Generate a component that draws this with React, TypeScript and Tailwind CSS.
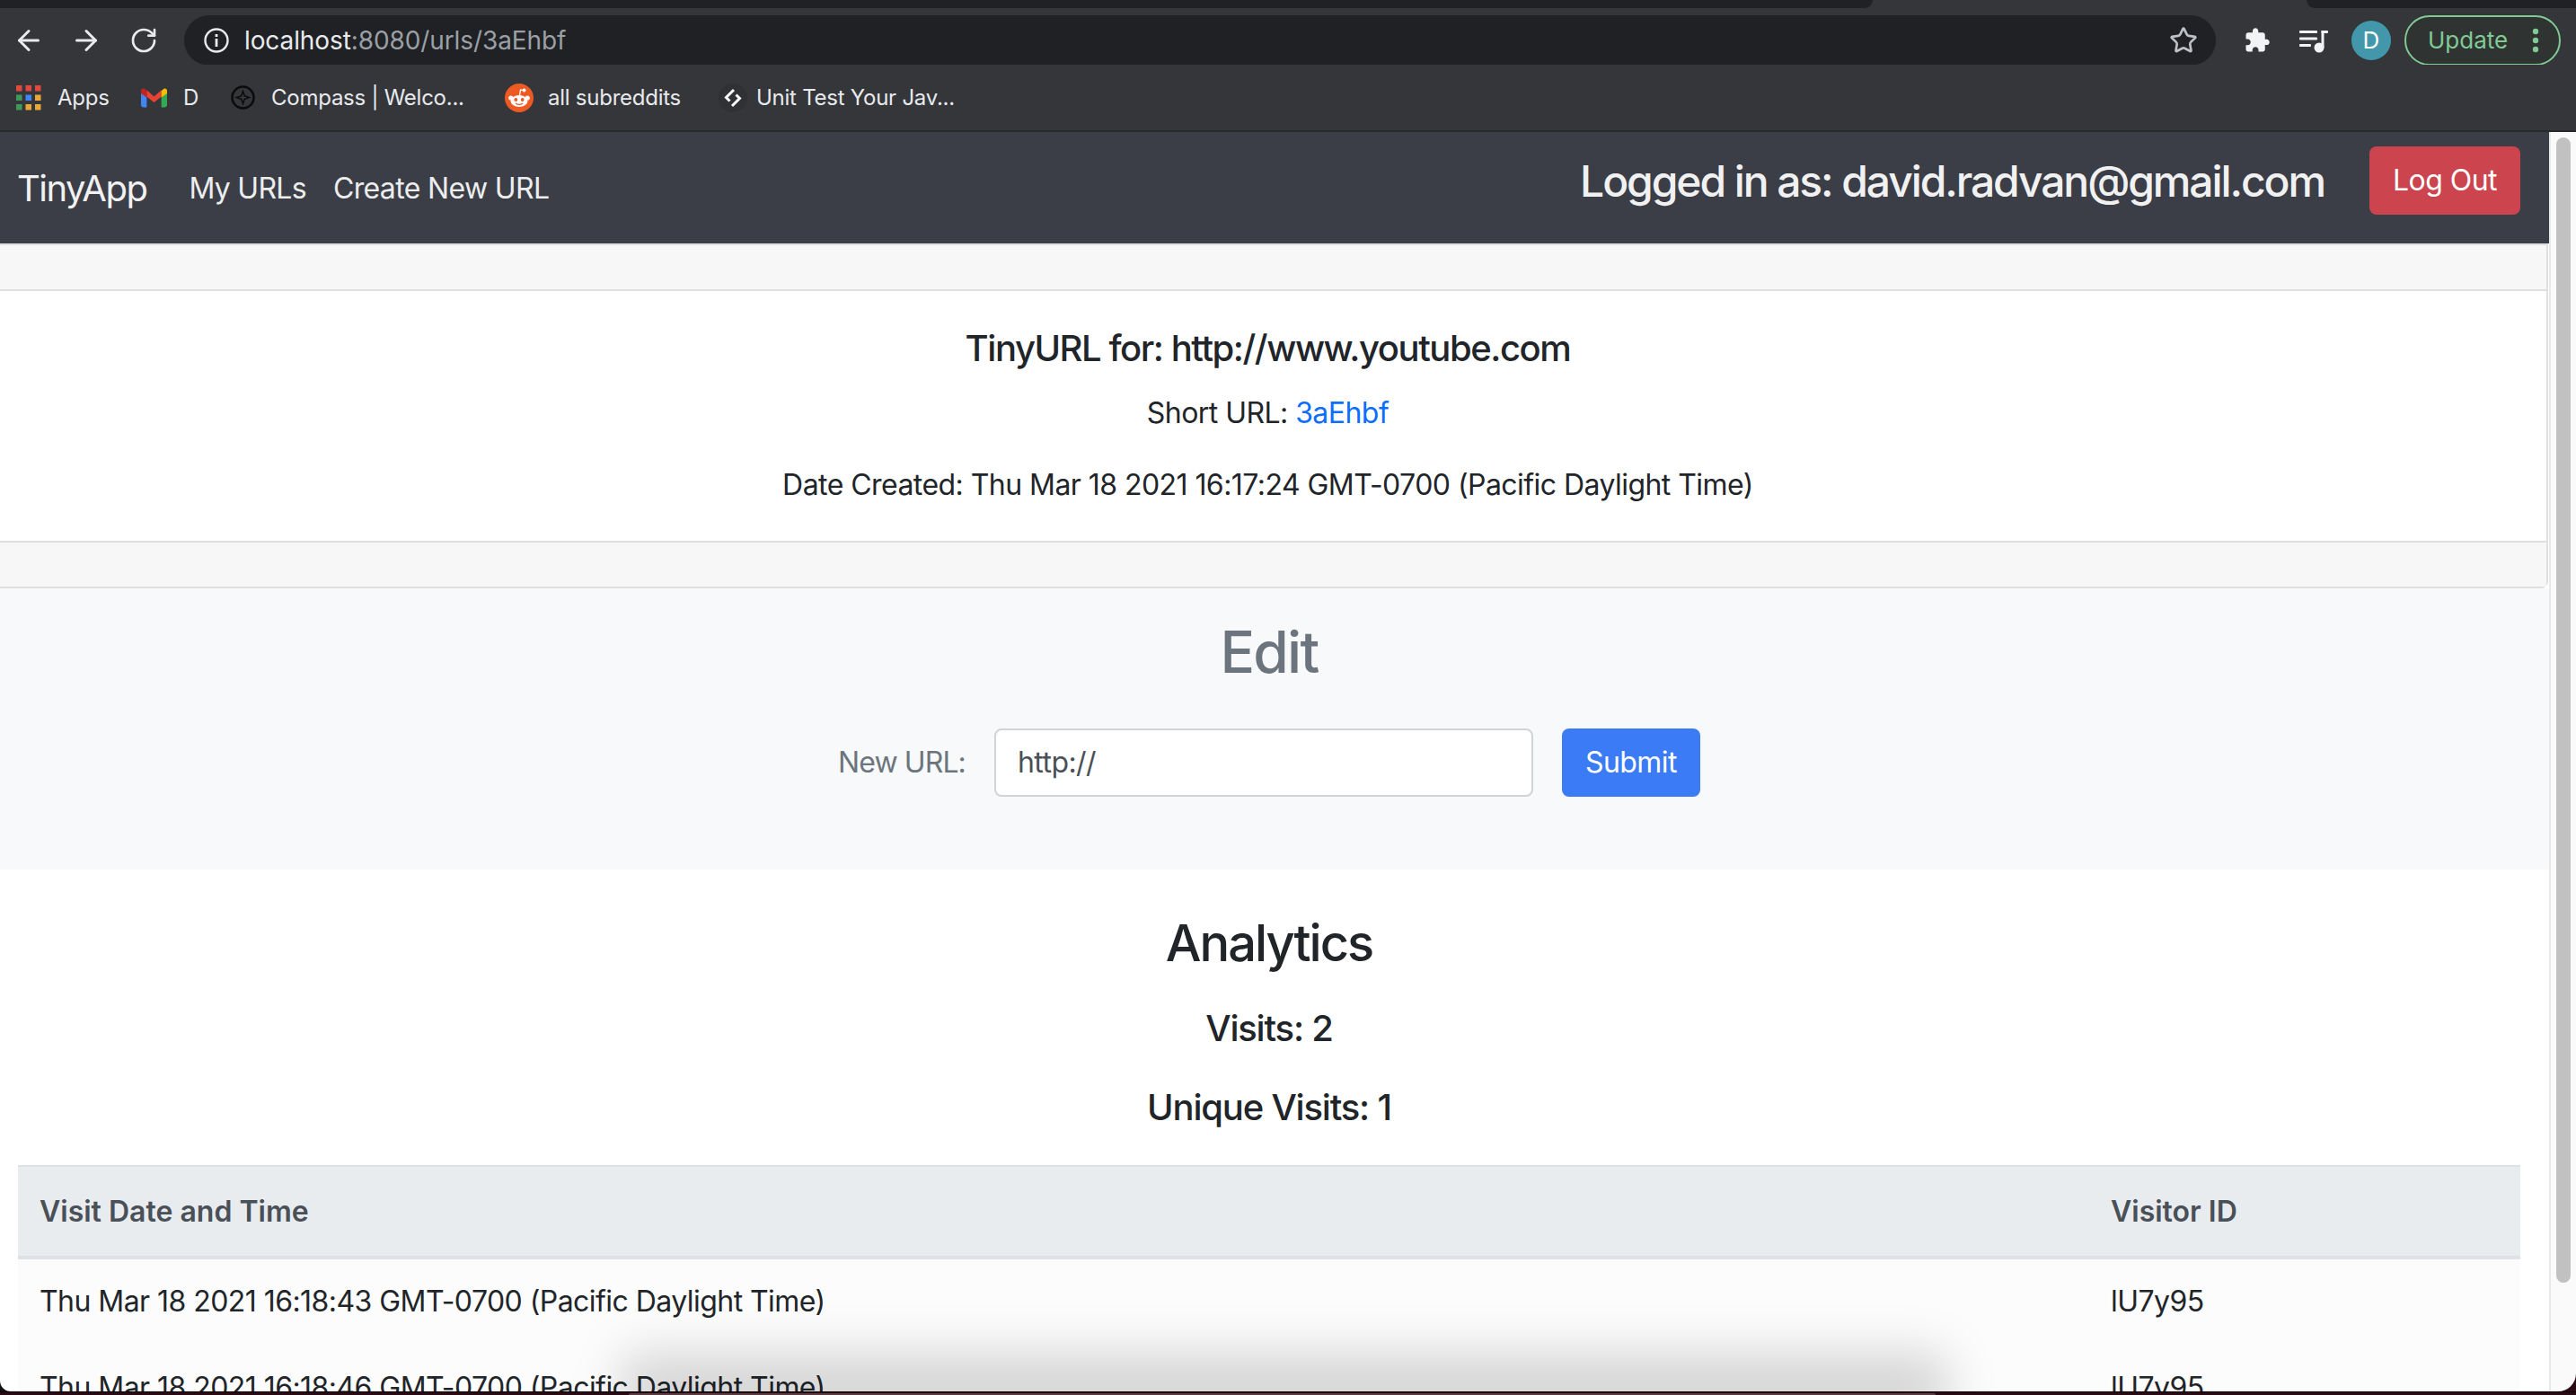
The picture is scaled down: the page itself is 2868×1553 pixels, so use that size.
import React from "react";
import { ArrowLeft, ArrowRight, RotateCw, Star } from "lucide-react";

function Bookmark({ icon, label, className }: { icon: React.ReactNode; label: string; className?: string }) {
  return (
    <div className={"flex items-center " + (className ?? "")}>
      {icon}
      <span className="text-[24px] tracking-[-0.25px] text-[#e8eaed] whitespace-nowrap">{label}</span>
    </div>
  );
}

function AppsIcon() {
  const rows = [
    ["#e2483b", "#e2483b", "#e2483b"],
    ["#3f9a5a", "#4285f4", "#eaa63b"],
    ["#3f9a5a", "#eaa63b", "#eaa63b"],
  ];
  return (
    <svg width="28" height="28" viewBox="0 0 28 28" className="mr-[18px]">
      {rows.map((r, y) =>
        r.map((c, x) => <rect key={`${x}-${y}`} x={x * 10.5} y={y * 10.5} width="6.500" height="6.500" fill={c} />)
      )}
    </svg>
  );
}

function GmailIcon() {
  return (
    <svg width="29" height="23" viewBox="0 0 32 24" className="mr-[18px]">
      <path d="M0 3v18c0 1.700 1.300 3 3 3h4V10z" fill="#4285f4" />
      <path d="M25 10v14h4c1.700 0 3-1.300 3-3V3z" fill="#34a853" />
      <path d="M7 3l9 8 9-8v8l-9 7-9-7z" fill="#ea4335" />
      <path d="M25 4l2-2c2-2 5-1 5 2v3l-7 5z" fill="#fbbc04" />
      <path d="M0 4c0-3 3-4 5-2l2 2v8L0 7z" fill="#c5221f" />
    </svg>
  );
}

function CompassIcon() {
  return (
    <svg width="27" height="27" viewBox="0 0 27 27" className="mr-[18px]">
      <circle cx="13.500" cy="13.500" r="12" fill="none" stroke="#0b0b0b" strokeWidth="2.500" />
      <path d="M13.500 6.500l1.800 5.200 5.200 1.800-5.200 1.800-1.800 5.200-1.800-5.200-5.200-1.800 5.200-1.800z" fill="none" stroke="#0b0b0b" strokeWidth="1.500" />
    </svg>
  );
}

function RedditIcon() {
  return (
    <svg width="32" height="32" viewBox="0 0 32 32" className="mr-[16px]">
      <circle cx="16" cy="16" r="16" fill="#ee5a24" />
      <ellipse cx="16" cy="19.500" rx="9.500" ry="6.500" fill="#fff" />
      <circle cx="6.800" cy="16" r="2.600" fill="#fff" />
      <circle cx="25.200" cy="16" r="2.600" fill="#fff" />
      <circle cx="21.500" cy="7.500" r="2" fill="#fff" />
      <path d="M16.500 13l1-6 3.500.6" fill="none" stroke="#fff" strokeWidth="1.300" />
      <circle cx="12.300" cy="18" r="1.900" fill="#ee5a24" />
      <circle cx="19.700" cy="18" r="1.900" fill="#ee5a24" />
      <path d="M12 22c2.500 1.800 5.500 1.800 8 0" fill="none" stroke="#ee5a24" strokeWidth="1.300" />
    </svg>
  );
}

function TestIcon() {
  return (
    <svg width="32" height="32" viewBox="0 0 32 32" className="mr-[10px] -ml-[2px]">
      <circle cx="16" cy="16" r="16" fill="#303134" />
      <path d="M17 7L8.500 15.500l4 4" fill="none" stroke="#f8f9fa" strokeWidth="3" />
      <path d="M15 25l8.500-8.500-4-4" fill="none" stroke="#f8f9fa" strokeWidth="3" />
    </svg>
  );
}

function PuzzleIcon() {
  return (
    <svg width="30" height="30" viewBox="0 0 24 24" fill="#f1f3f4">
      <path d="M20.500 11H19V7c0-1.100-.9-2-2-2h-4V3.500C13 2.120 11.880 1 10.500 1S8 2.120 8 3.500V5H4c-1.100 0-1.990.9-1.990 2v3.800H3.500c1.490 0 2.700 1.210 2.700 2.700s-1.210 2.700-2.700 2.700H2V20c0 1.100.9 2 2 2h3.800v-1.500c0-1.490 1.210-2.700 2.700-2.700s2.700 1.210 2.700 2.700V22H17c1.100 0 2-.9 2-2v-4h1.500c1.380 0 2.500-1.120 2.500-2.500S21.880 11 20.500 11z" />
    </svg>
  );
}

function MediaIcon() {
  return (
    <svg width="32" height="26" viewBox="0 0 32 26" fill="#f1f3f4">
      <rect x="0" y="1" width="20" height="3" rx="1" />
      <rect x="0" y="8.500" width="20" height="3" rx="1" />
      <rect x="0" y="16" width="13" height="3" rx="1" />
      <circle cx="22" cy="20" r="5.500" />
      <rect x="24.500" y="1" width="3" height="19" />
      <rect x="24.500" y="1" width="7.500" height="3" rx="1" />
    </svg>
  );
}

export default function App() {
  return (
    <div className="relative w-[2868px] h-[1553px] overflow-hidden flex flex-col bg-white text-[#212529] font-['Inter','Liberation_Sans',sans-serif]">
      {/* tab strip */}
      <div className="h-[9px] shrink-0 flex bg-[#35363a]">
        <div className="w-[2085px] bg-[#202124] rounded-br-[12px]" />
        <div className="flex-1" />
        <div className="w-[300px] bg-[#202124] rounded-bl-[12px]" />
      </div>

      {/* toolbar */}
      <div className="h-[63px] shrink-0 bg-[#35363a] flex items-center pt-[8px] pl-[14px]">
        <ArrowLeft size={36} strokeWidth={2} color="#e8eaed" className="shrink-0" />
        <ArrowRight size={36} strokeWidth={2} color="#e8eaed" className="ml-[28px] shrink-0" />
        <RotateCw size={32} strokeWidth={2} color="#e8eaed" className="ml-[30px] shrink-0" />
        <div className="ml-[29px] w-[2262px] h-[56px] shrink-0 rounded-full bg-[#202124] flex items-center pl-[21px] pr-[20px] tracking-[-0.1px]">
          <svg width="30" height="30" viewBox="0 0 30 30" className="mr-[16px]">
            <circle cx="15" cy="15" r="12.500" fill="none" stroke="#e8eaed" strokeWidth="2.400" />
            <rect x="13.600" y="13" width="2.800" height="9" fill="#e8eaed" />
            <rect x="13.600" y="8" width="2.800" height="3" fill="#e8eaed" />
          </svg>
          <span className="text-[28px] text-[#e8eaed]">localhost</span>
          <span className="text-[28px] text-[#9aa0a6]">:8080/urls/3aEhbf</span>
          <Star size={32} strokeWidth={2} color="#bdc1c6" className="ml-auto" />
        </div>
        <div className="ml-[31px] shrink-0"><PuzzleIcon /></div>
        <div className="ml-[32px] shrink-0 mt-[2px]"><MediaIcon /></div>
        <div className="ml-[26px] w-[44px] h-[44px] shrink-0 rounded-full bg-[#4397ab] flex items-center justify-center text-[26px] text-white">D</div>
        <div className="ml-[15px] w-[174px] h-[56px] shrink-0 rounded-full border-2 border-[#81c995] bg-[#2f3331] flex items-center pl-[24px] pr-[22px]">
          <span className="text-[26px] text-[#81c995]">Update</span>
          <svg width="8" height="28" viewBox="0 0 8 28" className="ml-auto" fill="#81c995">
            <circle cx="4" cy="4" r="3.200" />
            <circle cx="4" cy="14" r="3.200" />
            <circle cx="4" cy="24" r="3.200" />
          </svg>
        </div>
      </div>

      {/* bookmarks */}
      <div className="h-[75px] shrink-0 bg-[#35363a] flex items-center pl-[18px] border-b-2 border-[#28292c]">
        <Bookmark icon={<AppsIcon />} label="Apps" className="w-[139px]" />
        <Bookmark icon={<GmailIcon />} label="D" className="w-[100px]" />
        <Bookmark icon={<CompassIcon />} label="Compass | Welco..." className="w-[305px]" />
        <Bookmark icon={<RedditIcon />} label="all subreddits" className="w-[240px]" />
        <Bookmark icon={<TestIcon />} label="Unit Test Your Jav..." />
      </div>

      <div className="flex-1 flex min-h-0">
        <main className="w-[2838px] overflow-hidden tracking-[-0.55px]">
          {/* navbar */}
          <nav className="h-[124px] bg-[#3b3e47] flex items-center pl-[19px] pr-[32px]">
            <span className="text-[40px] tracking-[-1.5px] text-[#f1f1f1] mt-[2px]">TinyApp</span>
            <span className="ml-[47px] text-[32px] tracking-[-0.7px] text-[#ededed] mt-[2px]">My URLs</span>
            <span className="ml-[30px] text-[32px] tracking-[-0.65px] text-[#ededed] mt-[2px]">Create New URL</span>
            <span className="ml-auto text-[48px] tracking-[-2.1px] font-medium text-[#f1f1f1] -mt-[14px]">Logged in as: david.radvan@gmail.com</span>
            <button className="ml-[50px] w-[168px] h-[76px] rounded-[8px] bg-[#cc444d] text-[32px] text-white -mt-[16px]">Log Out</button>
          </nav>

          {/* card */}
          <section className="w-[2837px] border-r-2 border-b-2 border-[#dfdfdf] rounded-br-[8px]">
            <div className="h-[51px] bg-[#f7f7f7] border-t-2 border-[#dfdfdf]" />
            <div className="h-[282px] bg-white border-t-2 border-b-2 border-[#dfdfdf] pr-[12px] flex flex-col items-center pt-[40px]">
              <h5 className="text-[40px] tracking-[-1.45px] leading-[48px] font-medium">TinyURL for: http://www.youtube.com</h5>
              <p className="mt-[24px] text-[32px] leading-[48px]">
                Short URL: <span className="text-[#0d6efd]">3aEhbf</span>
              </p>
              <p className="mt-[32px] text-[32px] leading-[48px]">Date Created: Thu Mar 18 2021 16:17:24 GMT-0700 (Pacific Daylight Time)</p>
            </div>
            <div className="h-[49px] bg-[#f7f7f7]" />
          </section>

          {/* edit */}
          <section className="h-[313px] bg-[#f8f9fa] pr-[12px] flex flex-col items-center pt-[33px]">
            <h2 className="text-[64px] tracking-[-1.8px] leading-[76px] font-medium text-[#6c757d]">Edit</h2>
            <form className="mt-[47px] flex items-center">
              <label className="text-[32px] tracking-[-0.9px] text-[#6c757d]">New URL:</label>
              <div className="ml-[32px] w-[600px] h-[76px] bg-white border-2 border-[#ced4da] rounded-[8px] flex items-center pl-[24px] text-[32px] text-[#495057]">http://</div>
              <button type="button" className="ml-[32px] w-[154px] h-[76px] rounded-[8px] bg-[#3b7bf6] text-[32px] text-white">Submit</button>
            </form>
          </section>

          {/* analytics */}
          <section className="pt-[48px] pl-[20px] pr-[32px] flex flex-col items-center">
            <h2 className="text-[56px] tracking-[-2px] leading-[68px] font-medium">Analytics</h2>
            <h4 className="mt-[37px] text-[40px] tracking-[-1.2px] leading-[48px] font-medium">Visits: 2</h4>
            <h4 className="mt-[40px] text-[40px] tracking-[-1.2px] leading-[48px] font-medium">Unique Visits: 1</h4>
            <table className="mt-[40px] w-[2786px] table-fixed border-collapse text-[32px]">
              <thead>
                <tr className="h-[102px] bg-[#e9ecef] border-t-2 border-b-4 border-[#dee2e6] text-[#495057] tracking-normal">
                  <th className="pl-[24px] text-left font-semibold">Visit Date and Time</th>
                  <th className="w-[480px] pl-[24px] text-left font-semibold">Visitor ID</th>
                </tr>
              </thead>
              <tbody className="bg-[#fcfcfc]">
                <tr className="h-[96px]">
                  <td className="pl-[24px]">Thu Mar 18 2021 16:18:43 GMT-0700 (Pacific Daylight Time)</td>
                  <td className="pl-[24px]">lU7y95</td>
                </tr>
                <tr className="h-[98px]">
                  <td className="pl-[24px]">Thu Mar 18 2021 16:18:46 GMT-0700 (Pacific Daylight Time)</td>
                  <td className="pl-[24px]">lU7y95</td>
                </tr>
              </tbody>
            </table>
          </section>
        </main>

        {/* scrollbar */}
        <div className="w-[30px] bg-[#fafafa] border-l-2 border-[#e8e8e8] pl-[6px] pt-[6px]">
          <div className="w-[16px] h-[1275px] rounded-full bg-[#c1c1c1]" />
        </div>
      </div>

      {/* dock shadow */}
      <div className="absolute left-[690px] bottom-[-36px] w-[1480px] h-[84px] rounded-[24px] bg-black/15 blur-[26px]" />
      {/* window edge */}
      <div className="absolute left-0 right-0 bottom-0 h-[4px] bg-[#2b0a14] border-t border-black" />
      <div className="absolute left-[700px] w-[1455px] bottom-0 h-[2px] bg-[#5b3a40] rounded-t-[2px]" />
      <svg className="absolute right-0 bottom-[4px]" width="20" height="20" viewBox="0 0 20 20">
        <path d="M20 0v20H0A20 20 0 0 0 20 0z" fill="#2b0a14" />
      </svg>
      <svg className="absolute left-0 bottom-[4px]" width="12" height="12" viewBox="0 0 12 12">
        <path d="M0 0v12h12A12 12 0 0 1 0 0z" fill="#111" />
      </svg>
    </div>
  );
}
